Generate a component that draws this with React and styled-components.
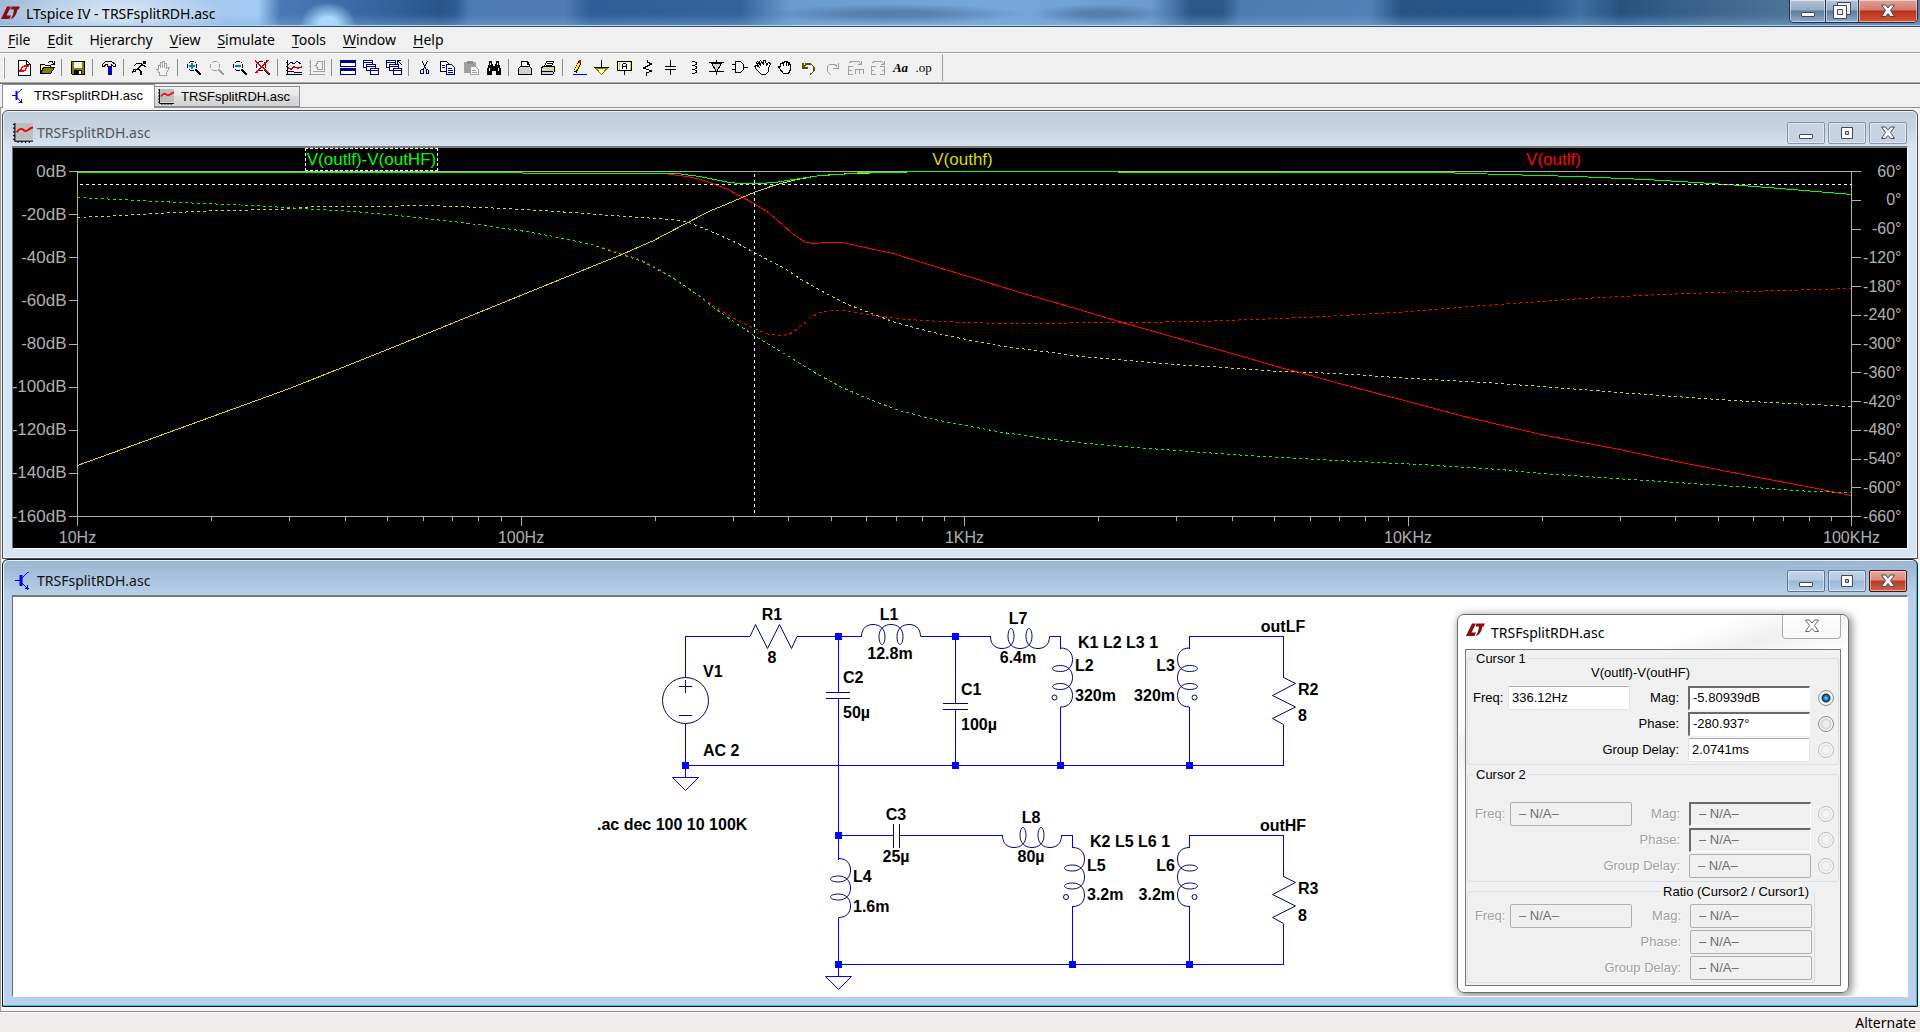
import React, { useLayoutEffect, useRef, useState } from "react";
import styled, { createGlobalStyle, css } from "styled-components";

const UI = `"Noto Sans", "Open Sans", sans-serif`;
const SANS = `"Liberation Sans", Arial, sans-serif`;

const Global = createGlobalStyle`
  *, *::before, *::after { box-sizing: border-box; }
  body { margin: 0; overflow: hidden; background: #f0f0f0; }
  button, input { font: inherit; color: inherit; margin: 0; }
`;

const Shell = styled.div`
  height: 100vh;
  display: flex;
  flex-direction: column;
  background: #f0f0f0;
  color: #000;
  font: 14px/18px ${UI};
`;

/* ---------- main caption ---------- */
const TitleBar = styled.header`
  flex: none;
  height: 27px;
  display: flex;
  align-items: flex-start;
  padding: 0 2px 0 1px;
  border-bottom: 1px solid #33486a;
  box-shadow: inset 0 -1px #b9d2ee;
  background:
    radial-gradient(ellipse 120px 26px at 110px 16px, rgba(255, 255, 255, 0.5), rgba(255, 255, 255, 0) 100%),
    radial-gradient(ellipse 28px 22px at 328px 24px, #a9d8ff 30%, rgba(140, 190, 240, 0) 100%),
    radial-gradient(ellipse 130px 10px at 895px 14px, rgba(62, 96, 140, 0.5) 30%, rgba(62, 96, 140, 0) 100%),
    radial-gradient(ellipse 70px 10px at 1100px 14px, rgba(62, 96, 140, 0.5) 30%, rgba(62, 96, 140, 0) 100%),
    linear-gradient(180deg, rgba(255, 255, 255, 0) 55%, rgba(130, 175, 225, 0.45)),
    linear-gradient(92deg, #9ebbd9 0, #bcd3ec 120px, #a5c8ee 225px, #a2cdf8 258px, #4a7ab5 280px,
      #3969a4 360px, #28548a 440px, #2d5b93 455px, #4c79b0 470px, #4f7bb2 565px, #2e5e97 590px,
      #326399 740px, #6c9bcf 790px, #77a7db 1000px, #6d9bd0 1150px, #2b5886 1190px, #2b5886 1222px,
      #4e7bb0 1240px, #5280b6 1370px, #275483 1400px, #275687 1540px, #3f6f9f 1580px, #27527f 1620px,
      #376089 1680px, #4b7297 1780px, #5c7fa3 100%);
`;
const TitleIcon = styled.span`
  padding-top: 6px;
`;
const TitleText = styled.h1`
  flex: 1;
  margin: 0;
  padding: 4px 0 0 6px;
  font: 400 14px/19px ${UI};
`;
const MainCaption = styled.div`
  display: flex;
  height: 23px;
  border: 1px solid #1f2f48;
  border-top: 0;
  border-radius: 0 0 5px 5px;
  overflow: hidden;
`;
const MainCaptionButton = styled.button`
  width: ${(p) => p.$w}px;
  padding: 0;
  border: 0;
  border-left: ${(p) => (p.$first ? 0 : "1px solid #1f2f48")};
  display: flex;
  align-items: center;
  justify-content: center;
  box-shadow: inset 0 0 0 1px rgba(255, 255, 255, 0.5);
  background: ${(p) =>
    p.$close
      ? "linear-gradient(#e4a398 0, #d47a6c 45%, #b8301a 50%, #d4563a 100%)"
      : "linear-gradient(#b4c4d8 0, #93a9c4 45%, #5c7ca2 50%, #8eabca 100%)"};
`;

/* ---------- menu ---------- */
const MenuBar = styled.nav`
  flex: none;
  height: 26px;
  display: flex;
  align-items: center;
  gap: 17px;
  padding-left: 8px;
  border-bottom: 1px solid #a0a0a0;
`;
const MenuItem = styled.button`
  border: 0;
  padding: 0;
  background: none;
  line-height: 20px;
  u { text-underline-offset: 2px; }
`;

/* ---------- tool bar ---------- */
const ToolRow = styled.div`
  flex: none;
  height: 31px;
  display: flex;
  border-top: 1px solid #fff;
  border-bottom: 1px solid #6e6e6e;
  box-shadow: inset 0 -1px #a6a6a6;
  padding: 0 0 2px 3px;
`;
const ToolBar = styled.div`
  display: flex;
  align-items: center;
  padding-right: 7px;
  border-right: 1px solid #a0a0a0;
`;
const Grip = styled.span`
  width: 2px;
  height: 22px;
  margin-right: 7px;
  border-right: 1px solid #a0a0a0;
  border-left: 1px solid #fff;
`;
const ToolButton = styled.button`
  width: 23px;
  height: 22px;
  padding: 0;
  border: 0;
  background: none;
  display: flex;
  align-items: center;
  justify-content: center;
`;
const Separator = styled.span`
  width: 1px;
  height: 17px;
  margin: 0 4px 0 3px;
  background: #8c8c8c;
`;
const Pixels = styled.svg`
  display: block;
  overflow: visible;
  shape-rendering: crispEdges;
  fill: none;
  stroke-width: 1;
`;

/* ---------- document tabs ---------- */
const TabRow = styled.div`
  flex: none;
  height: 24px;
  display: flex;
  align-items: flex-end;
  padding-left: 2px;
  border-bottom: 1px solid #8e8f94;
`;
const Tab = styled.button`
  display: flex;
  align-items: center;
  height: ${(p) => (p.$active ? 24 : 21)}px;
  width: ${(p) => (p.$active ? 153 : 145)}px;
  padding: 0 0 ${(p) => (p.$active ? 2 : 0)}px ${(p) => (p.$active ? 8 : 3)}px;
  gap: 7px;
  border: 1px solid #8c8e94;
  border-bottom: ${(p) => (p.$active ? 0 : "1px solid #8c8e94")};
  border-left: ${(p) => (p.$active ? "1px solid #8c8e94" : 0)};
  margin-bottom: ${(p) => (p.$active ? -1 : 0)}px;
  background: ${(p) => (p.$active ? "#fff" : "linear-gradient(#f1f1f1 0, #e8e8e8 45%, #dcdcdc 50%, #d2d2d2 100%)")};
  font: 13px/18px ${SANS};
`;

/* ---------- child windows ---------- */
const Desk = styled.main`
  flex: 1;
  min-height: 0;
  display: flex;
  flex-direction: column;
  padding: 2px 2px 4px 2px;
  background: linear-gradient(90deg, #9a9a9a 0 1px, #f4f4f4 1px 100%);
`;
const Child = styled.section`
  flex: 1 1 0;
  min-height: 0;
  display: flex;
  flex-direction: column;
  border: 1px solid ${(p) => (p.$active ? "#15181c" : "#4a4d50")};
  border-radius: 6px 6px 0 0;
  padding: 0 9px 9px 9px;
  box-shadow: ${(p) => (p.$active ? "inset -1px -1px #37bfe0, inset 1px 1px #e6f1fb" : "inset 0 0 0 1px #eef4fa")};
  background: ${(p) =>
    p.$active
      ? "linear-gradient(#99b4d1 0, #b9d1ea 36px, #b9d1ea 100%)"
      : "linear-gradient(#bfcddb 0, #c8d4e2 18px, #d7e4f2 36px)"};
`;
const ChildTitle = styled.header`
  flex: none;
  height: 35px;
  display: flex;
  align-items: center;
  padding: 8px 1px 0 0;
`;
const ChildName = styled.h2`
  flex: 1;
  margin: 0;
  padding-left: 4px;
  font: 400 14px/18px ${UI};
  color: ${(p) => (p.$active ? "#101010" : "#50565c")};
`;
const ChildIcon = styled.span`
  display: flex;
  width: 21px;
  justify-content: flex-end;
`;
const CaptionGroup = styled.div`
  display: flex;
  gap: 3px;
`;
const CaptionButton = styled.button`
  width: 38px;
  height: 22px;
  padding: 0;
  display: flex;
  align-items: center;
  justify-content: center;
  border-radius: 2px;
  border: 1px solid #8493b0;
  box-shadow: inset 0 0 0 1px rgba(255, 255, 255, 0.45);
  background: #c6d3e3;
  ${(p) =>
    p.$tone === "active" &&
    css`
      border-color: #5c7291;
      background: linear-gradient(#c3d4e8 0, #b6cae2 45%, #9bb7d6 50%, #b4cde8 100%);
    `}
  ${(p) =>
    p.$tone === "close" &&
    css`
      border-color: #43141a;
      background: linear-gradient(#e9a89c 0, #dc8a7b 45%, #b73a22 50%, #d2604a 100%);
    `}
`;
const Canvas = styled.div`
  position: relative;
  flex: 1;
  min-height: 0;
  border: 1px solid #fff;
  border-top: 2px solid #77797b;
  border-left-color: #6e6e6e;
  background: ${(p) => (p.$dark ? "#000" : "#fff")};
  overflow: hidden;
`;

/* ---------- wave form ---------- */
const Plot = styled.div`
  height: 100%;
  display: flex;
  flex-direction: column;
`;
const TraceLabels = styled.div`
  flex: none;
  display: grid;
  grid-template-columns: repeat(3, 1fr);
  justify-items: center;
  height: 23px;
  padding: 0 58px 0 63px;
`;
const TraceLabel = styled.span`
  height: 23px;
  padding: 0 1px;
  border: 1px dashed ${(p) => (p.$selected ? "#fff" : "transparent")};
  color: ${(p) => p.$color};
  font: 17px/21px ${SANS};
`;
const PlotArea = styled.div`
  flex: 1;
  min-height: 0;
`;
const PlotSvg = styled.svg`
  display: block;
  width: 100%;
  height: 100%;
  overflow: visible;
  fill: none;
`;
const AxisText = styled.text`
  fill: #b0b0b0;
  font: ${(p) => (p.$gain ? 17 : 16)}px ${SANS};
`;

const GREEN_MAG = "78,172 521,172 525,173 677,173 700,176 715,179 729,182 742,183 760,183 775,182 800,178 820,175 840,174 863,172 950,171 1280,172 1438,172 1503,174 1576,176 1645,179 1696,182 1741,185 1780,188 1815,191 1851,194";
const YELLOW_MAG = "78,465 290,388 388,349 521,295 622,254 640,246 654,240 688,222 711,210 726,204 754,192 771,186 781,183 797,179 820,175 852,173 926,171 1280,171";
const RED_MAG = "78,172 521,172 525,173 665,173 671,174 687,176 701,179 718,185 728,189 741,196 754,203 767,211 779,221 795,235 806,242 815,243 826,242 842,242 856,245 893,253 922,262 965,275 1020,292 1079,309 1122,322 1175,337 1232,353 1280,367 1300,372 1339,383 1408,401 1464,416 1541,434 1619,449 1676,461 1753,476 1811,487 1851,495";
const GREEN_PH = "78,197 98,198 180,202 253,205 302,208 355,211 408,216 453,221 486,225 526,231 559,237 592,244 622,254 640,260 654,267 673,277 697,294 715,308 738,324 754,335 789,356 813,371 840,386 865,397 899,410 934,419 965,425 1003,432 1052,439 1097,444 1175,450 1232,454 1280,457 1337,460 1419,464 1500,469 1541,473 1615,478 1676,482 1753,487 1811,491 1851,492";
const YELLOW_PH = "78,217 122,215 175,212 220,210 278,209 318,206 371,206 429,205 482,207 526,209 571,212 640,217 658,218 679,220 689,222 709,230 738,243 754,252 783,267 803,280 828,294 848,304 877,315 895,322 922,329 942,334 966,339 1003,346 1044,351 1081,356 1130,360 1175,364 1224,367 1280,371 1337,373 1411,378 1484,382 1541,386 1619,392 1688,397 1749,401 1811,404 1851,406";
const RED_PH = "78,197 98,198 180,202 253,205 302,208 355,211 408,216 453,221 486,225 526,231 559,237 592,244 622,253 640,259 654,266 664,272 689,288 713,305 734,318 754,328 769,334 783,335 791,333 803,324 811,317 820,312 832,310 844,310 869,314 897,318 922,320 966,322 1007,323 1130,322 1199,321 1280,318 1325,316 1411,311 1484,305 1541,301 1582,298 1639,295 1713,292 1782,290 1851,288";

const DECADES = ["10Hz", "100Hz", "1KHz", "10KHz", "100KHz"];
const GAINS = [0, -20, -40, -60, -80, -100, -120, -140, -160];
const PHASES = [60, 0, -60, -120, -180, -240, -300, -360, -420, -480, -540, -600, -660];

function WaveForm() {
  const box = useRef(null);
  const [size, setSize] = useState({ w: 1894, h: 377 });
  useLayoutEffect(() => {
    const read = () => {
      const r = box.current.getBoundingClientRect();
      setSize({ w: Math.round(r.width), h: Math.round(r.height) });
    };
    read();
    window.addEventListener("resize", read);
    return () => window.removeEventListener("resize", read);
  }, []);

  const left = 64.5;
  const right = size.w - 55.5;
  const bottom = size.h - 31.5;
  const top = 0.5;
  const sx = (x) => left + ((x - 78) / 1773) * (right - left);
  const sy = (y) => top + ((y - 171) / 345) * (bottom - top);
  const path = (pts) =>
    pts
      .split(" ")
      .map((p) => p.split(",").map(Number))
      .map(([x, y]) => `${sx(x).toFixed(1)},${sy(y).toFixed(1)}`)
      .join(" ");
  const tick = (d, n) => Math.round(left + ((d + Math.log10(n)) / 4) * (right - left)) + 0.5;
  const half = (v) => Math.floor(v) + 0.5;

  return (
    <PlotArea ref={box}>
      <PlotSvg role="img" aria-label="Frequency response">
        <g stroke="#b0b0b0" shapeRendering="crispEdges">
          <path d={`M${left} ${top}H${right}V${bottom}H${left}Z`} />
          {GAINS.map((g, i) => (
            <path key={g} d={`M${left - 9} ${half(top + (i / 8) * (bottom - top))}h9`} />
          ))}
          {PHASES.map((p, i) => (
            <path key={p} d={`M${right} ${half(top + (i / 12) * (bottom - top))}h9`} />
          ))}
          {DECADES.map((label, d) => (
            <path key={label} d={`M${half(left + (d / 4) * (right - left))} ${bottom}v9`} />
          ))}
          {[0, 1, 2, 3].map((d) =>
            [2, 3, 4, 5, 6, 7, 8, 9].map((n) => <path key={`${d}-${n}`} d={`M${tick(d, n)} ${bottom}v4`} />)
          )}
        </g>
        <g shapeRendering="crispEdges">
          <polyline points={path(RED_PH)} stroke="#ff0000" strokeDasharray="3 3" />
          <polyline points={path(YELLOW_PH)} stroke="#d8d800" strokeDasharray="3 3" />
          <polyline points={path(GREEN_PH)} stroke="#00ff00" strokeDasharray="3 3" />
          <polyline points={path(RED_MAG)} stroke="#ff0000" />
          <polyline points={path(YELLOW_MAG)} stroke="#d8d800" />
          <polyline points={path(GREEN_MAG)} stroke="#00ff00" />
          <path d={`M${left + 2} ${half(sy(184))}H${right}`} stroke="#fff" strokeDasharray="3 3" />
          <path d={`M${half(sx(755))} ${top + 2}V${bottom - 3}`} stroke="#fff" strokeDasharray="3 3" />
        </g>
        {GAINS.map((g, i) => (
          <AxisText $gain key={g} x={left - 11} y={Math.round(top + (i / 8) * (bottom - top)) + 5} textAnchor="end">{`${g}dB`}</AxisText>
        ))}
        {PHASES.map((p, i) => (
          <AxisText key={p} x={right + 50} y={Math.round(top + (i / 12) * (bottom - top)) + 5} textAnchor="end">{`${p}°`}</AxisText>
        ))}
        {DECADES.map((label, d) => (
          <AxisText key={label} x={left + (d / 4) * (right - left)} y={bottom + 26} textAnchor="middle">{label}</AxisText>
        ))}
      </PlotSvg>
    </PlotArea>
  );
}

/* ---------- schematic ---------- */
const SchematicSvg = styled.svg`
  display: block;
  width: 100%;
  height: 100%;
  fill: none;
  stroke: #000080;
  text {
    fill: #000;
    stroke: none;
    font: 700 16px ${SANS};
  }
`;

const COIL =
  "M0 0C0 -9 6 -12 11.500 -12C18 -12 23.500 -8 23.500 0C23.500 5 22 8 20.500 8C19 8 17.500 5 17.500 0C17.500 -8 23 -12 29.500 -12C36 -12 41.500 -8 41.500 0C41.500 5 40 8 38.500 8C37 8 35.500 5 35.500 0C35.500 -8 41 -12 47.500 -12C53 -12 59 -9 59 0";
const Coil = ({ x, y, t = "" }) => <path d={COIL} transform={`translate(${x} ${y}) ${t}`} />;
const Ground = ({ x, y }) => <path d={`M${x - 13} ${y}h26l-13 13z`} stroke="#0000ff" />;
const Node = ({ x, y }) => <rect x={x - 3.5} y={y - 3.5} width="7" height="7" fill="#0000ff" stroke="none" />;

const NODES = [
  [838.5, 636.5], [955.5, 636.5], [685.5, 765.5], [955.5, 765.5], [1060.5, 765.5], [1189.5, 765.5],
  [838.5, 835.5], [838.5, 964.5], [1072.5, 964.5], [1189.5, 964.5],
];
const NOTES = [
  [772, 620, "R1", "middle"], [772, 663, "8", "middle"], [889, 620, "L1", "middle"], [890, 659, "12.8m", "middle"],
  [1018, 624, "L7", "middle"], [1018, 663, "6.4m", "middle"], [703, 677, "V1"], [843, 683, "C2"], [843, 718, "50µ"],
  [961, 695, "C1"], [961, 730, "100µ"], [703, 756, "AC 2"], [597, 830, ".ac dec 100 10 100K"],
  [896, 820, "C3", "middle"], [896, 862, "25µ", "middle"], [853, 882, "L4"], [853, 912, "1.6m"],
  [1078, 648, "K1 L2 L3 1"], [1075, 671, "L2"], [1075, 701, "320m"], [1175, 671, "L3", "end"], [1175, 701, "320m", "end"],
  [1283, 632, "outLF", "middle"], [1298, 695, "R2"], [1298, 721, "8"], [1031, 823, "L8", "middle"],
  [1031, 862, "80µ", "middle"], [1090, 847, "K2 L5 L6 1"], [1087, 871, "L5"], [1087, 900, "3.2m"],
  [1175, 871, "L6", "end"], [1175, 900, "3.2m", "end"], [1283, 831, "outHF", "middle"], [1298, 894, "R3"], [1298, 921, "8"],
];

function Schematic() {
  return (
    <SchematicSvg role="img" aria-label="Crossover schematic">
      <g transform="translate(-13 -597)">
        <g stroke="#0000ff" shapeRendering="crispEdges">
          <path d="M685.500 677.500V636.500H750M797 636.500H861.500M920.500 636.500H990.500M1049.500 636.500H1060.500V648.500" />
          <path d="M838.500 636.500V692.500M838.500 698.500V859.500M955.500 636.500V703.500M955.500 709.500V765.500" />
          <path d="M685.500 724V777.500M685.500 765.500H1283.500V724.500M1060.500 706.500V765.500M1189.500 706.500V765.500" />
          <path d="M1189.500 648.500V636.500H1283.500V677.500" />
          <path d="M838.500 835.500H893.500M899.500 835.500H1002.500M1060.500 835.500H1072.500V847.500" />
          <path d="M838.500 917.500V976.500M838.500 964.500H1283.500V923.500M1072.500 906V964.500M1189.500 906V964.500" />
          <path d="M1189.500 847.500V835.500H1283.500V876.500" />
        </g>
        <path d="M750 636.500L755.500 624.500L767.500 648.500L779.500 624.500L791.500 648.500L797 636.500" />
        <path d="M1283.500 677.500L1295.500 683.500L1272.500 695.500L1295.500 707L1272.500 718.500L1283.500 724.500" />
        <path d="M1283.500 876.500L1295.500 882.500L1272.500 894.500L1295.500 906L1272.500 917.500L1283.500 923.500" />
        <circle cx="685.500" cy="700.500" r="23" />
        <g shapeRendering="crispEdges">
          <path d="M679 686.500H692M685.500 680V693M679 715.500H692" />
          <path d="M826 692.500H850M826 698.500H850M943 703.500H968M943 709.500H968M893.500 824V848M899.500 824V848" />
        </g>
        <Coil x={861.5} y={636.5} />
        <Coil x={990.5} y={636.5} t="scale(1 -1)" />
        <Coil x={1002.5} y={835.5} t="scale(1 -1)" />
        <Coil x={838.5} y={858.5} t="rotate(90)" />
        <Coil x={1060.5} y={648} t="rotate(90)" />
        <Coil x={1072.5} y={847.5} t="rotate(90)" />
        <Coil x={1189.5} y={648} t="rotate(90) scale(1 -1)" />
        <Coil x={1189.5} y={847.5} t="rotate(90) scale(1 -1)" />
        {[[1054.5, 697.5], [1194.5, 697.5], [1066, 897], [1194.5, 897]].map(([x, y]) => (
          <circle key={`${x} ${y}`} cx={x} cy={y} r="2.500" />
        ))}
        <Ground x={685.5} y={777.5} />
        <Ground x={838.5} y={976.5} />
        {NODES.map(([x, y]) => <Node key={`${x} ${y}`} x={x} y={y} />)}
        {NOTES.map(([x, y, s, anchor]) => (
          <text key={`${x} ${y}`} x={x} y={y} textAnchor={anchor || "start"}>{s}</text>
        ))}
      </g>
    </SchematicSvg>
  );
}

/* ---------- cursor dialog ---------- */
const Dialog = styled.section`
  position: absolute;
  right: 58px;
  top: 17px;
  width: 392px;
  padding: 0 7px 6px;
  border: 1px solid #6b6b6b;
  border-radius: 7px;
  background: linear-gradient(160deg, #fff 0, #fff 20%, #f0f0f0 26%, #fff 34%, #fff 100%);
  box-shadow: inset 0 0 0 1px #fff, 2px 2px 8px 1px rgba(0, 0, 0, 0.45);
`;
const DialogTitle = styled.header`
  display: flex;
  height: 34px;
`;
const DialogName = styled.h2`
  flex: 1;
  margin: 0;
  padding: 9px 0 0 6px;
  font: 400 14px/18px ${UI};
`;
const DialogIcon = styled.span`
  padding: 8px 0 0 1px;
`;
const DialogClose = styled.button`
  width: 59px;
  height: 24px;
  padding: 0;
  display: flex;
  align-items: center;
  justify-content: center;
  border: 1px solid #a9a9a9;
  border-top: 0;
  border-radius: 0 0 4px 4px;
  background: linear-gradient(#fff, #f7f7f7);
`;
const DialogBody = styled.form`
  display: flex;
  flex-direction: column;
  gap: 2px;
  padding: 1px 1px 2px;
  border: 1px solid #777;
  background: #f0f0f0;
  font: 13px/16px ${SANS};
`;
const Group = styled.fieldset`
  min-width: 0;
  margin: 0 ${(p) => (p.$short ? 24 : 0)}px 0 0;
  padding: 0 0 ${(p) => (p.$live || p.$short ? 2 : 3)}px 5px;
  border: 1px solid #d5dfe5;
  border-radius: 3px;
`;
const Legend = styled.legend`
  padding: 0 3px;
  margin-left: ${(p) => (p.$end ? "auto" : "0")};
  margin-right: ${(p) => (p.$end ? "2px" : "0")};
  line-height: 16px;
`;
const Source = styled.p`
  margin: 0;
  height: 19px;
  padding-right: 30px;
  text-align: center;
  line-height: 12px;
`;
const Rows = styled.div`
  display: flex;
  flex-direction: column;
  gap: 2px;
  padding-top: ${(p) => (p.$short ? 4 : 0)}px;
  padding-right: ${(p) => (p.$short ? 2 : 4)}px;
  padding-left: ${(p) => (p.$live ? 0 : 2)}px;
`;
const Row = styled.div`
  display: flex;
  align-items: center;
  justify-content: flex-end;
  height: 24px;
`;
const FieldLabel = styled.label`
  color: ${(p) => (p.$off ? "#a0a0a0" : "#000")};
  text-shadow: ${(p) => (p.$off ? "1px 1px #fff" : "none")};
  ${(p) => p.$lead && "width: 35px;"}
  margin-right: ${(p) => (p.$lead ? 0 : 9)}px;
`;
const Field = styled.input`
  width: 122px;
  height: 24px;
  padding: 0 3px 1px;
  border: 1px solid #e2e3ea;
  border-top-color: #abadb3;
  border-radius: 2px;
  background: #fff;
  outline: 0;
  ${(p) =>
    p.$sunken &&
    css`
      border: 1px solid #fff;
      border-top: 2px solid #696969;
      border-left: 2px solid #696969;
      border-radius: 0;
    `}
  &:disabled {
    padding-left: 8px;
    color: #6d6d6d;
    background: #f0f0f0;
    border-color: ${(p) => (p.$sunken ? "#696969 #fff #fff #696969" : "#afafaf")};
  }
  ${(p) => p.$lead && "margin-right: auto;"}
`;
const Radio = styled.input`
  appearance: none;
  flex: none;
  width: 16px;
  height: 16px;
  margin-left: ${(p) => (p.$live ? 8 : 7)}px;
  border: 1px solid #8e8f8f;
  border-radius: 50%;
  background: radial-gradient(circle, #eee 0 3px, #cfcfcf 5px, #f6f6f6 6px);
  &:checked {
    background: radial-gradient(circle at 50% 50%, #9fe4fb 0, #1f7fc0 2px, #10344f 4px, #f2f4f6 5px);
  }
  &:disabled {
    border-color: #bcbcbc;
    background: radial-gradient(circle, #f3f3f3 0 3px, #e0e0e0 5px, #f8f8f8 6px);
  }
`;

const CURSORS = [
  { id: "c1", title: "Cursor 1", live: true, source: "V(outlf)-V(outHF)", freq: "336.12Hz", values: ["-5.80939dB", "-280.937°", "2.0741ms"], radios: true },
  { id: "c2", title: "Cursor 2", source: "", freq: "– N/A–", values: ["– N/A–", "– N/A–", "– N/A–"], radios: true },
  { id: "ratio", title: "Ratio (Cursor2 / Cursor1)", freq: "– N/A–", values: ["– N/A–", "– N/A–", "– N/A–"] },
];

function CursorDialog() {
  return (
    <Dialog aria-label="Cursor readout">
      <DialogTitle>
        <DialogIcon><LtLogo /></DialogIcon>
        <DialogName>TRSFsplitRDH.asc</DialogName>
        <DialogClose type="button" aria-label="Close readout">
          <Glyph kind="x" line="#666" />
        </DialogClose>
      </DialogTitle>
      <DialogBody>
        {CURSORS.map((c) => (
          <Group key={c.id} $live={c.live} $short={!c.radios}>
            <Legend $end={!c.radios}>{c.title}</Legend>
            {c.source !== undefined && <Source>{c.source}</Source>}
            <Rows $live={c.live} $short={!c.radios}>
              {["Mag:", "Phase:", "Group Delay:"].map((name, i) => (
                <Row key={name}>
                  {i === 0 && (
                    <>
                      <FieldLabel $lead $off={!c.live} htmlFor={`${c.id}-f`}>Freq:</FieldLabel>
                      <Field $lead id={`${c.id}-f`} defaultValue={c.freq} disabled={!c.live} />
                    </>
                  )}
                  <FieldLabel $off={!c.live} htmlFor={`${c.id}-${i}`}>{name}</FieldLabel>
                  <Field id={`${c.id}-${i}`} defaultValue={c.values[i]} disabled={!c.live} $sunken={c.radios && i < 2} />
                  {c.radios && (
                    <Radio
                      type="radio"
                      name="slope"
                      aria-label={`${c.title} ${name}`}
                      defaultChecked={c.live && i === 0}
                      disabled={!c.live || i === 2}
                      $live={c.live}
                    />
                  )}
                </Row>
              ))}
            </Rows>
          </Group>
        ))}
      </DialogBody>
    </Dialog>
  );
}

/* ---------- drawings ---------- */
const LtLogo = () => (
  <svg width="19" height="14" viewBox="0 0 19 14" fill="#8b0a10">
    <path d="M6 0.500h4L5.500 9.500H10L8.500 13H0z" />
    <path d="M10.500 0.500H19L17.500 3.500H16.500C15.500 8 14 12 9.500 13C12 10 12.500 7 13 3.500H9.500z" />
  </svg>
);

const Glyph = ({ kind, line = "#40485c" }) => {
  if (kind === "min")
    return (
      <svg width="16" height="16" viewBox="0 0 16 16">
        <rect x="1.500" y="9.500" width="13" height="4" rx="0.500" fill="#fff" stroke={line} />
      </svg>
    );
  if (kind === "max")
    return (
      <svg width="14" height="14" viewBox="0 0 14 14" stroke={line} fillRule="evenodd">
        <path d="M1.500 1.500h11v11h-11zM5.500 5.500v3h3v-3z" fill="#fff" />
      </svg>
    );
  if (kind === "restore")
    return (
      <svg width="18" height="18" viewBox="0 0 18 18" stroke={line} fillRule="evenodd">
        <path d="M4.500 .5h13v12h-13z" fill="#e8eef5" />
        <path d="M.5 3.500h13v13H.5zM4.500 7.500v5h5v-5z" fill="#fff" />
      </svg>
    );
  return (
    <svg width="16" height="14" viewBox="0 0 16 14" fill="#fff" stroke={line}>
      <path d="M1.500 1h4L8 4l2.500-3h4L10.500 6.500 14.500 12.500h-4L8 9.500l-2.500 3h-4L5.500 6.500z" />
    </svg>
  );
};

const WaveIcon = ({ size = 16 }) => (
  <svg width={size} height={size} viewBox="0 0 16 16" fill="none">
    <rect x="2" y="0" width="14" height="13" fill="#bdbdbd" />
    <path d="M1.500 0V14.500H16M0 1h2M0 4h2M0 7h2M0 10h2M0 13h2M4 14v2M7 14v2M10 14v2M13 14v2" stroke="#111" />
    <path d="M3 7.500C5 4 7 4 9 6C11 8 13 3.500 16 3.500" stroke="#f00000" strokeWidth="1.600" />
  </svg>
);

const SchematicIcon = () => (
  <svg width="18" height="20" viewBox="0 0 18 20" fill="none" stroke="#0000f0">
    <path d="M0 9.500H5M7 7L12 2M12 1.500h2M7 12L13 18M10 17.500h4M12.500 14v5" />
    <path d="M6 4V15" strokeWidth="3" />
  </svg>
);
const TabSchematicIcon = () => (
  <svg width="16" height="16" viewBox="0 0 16 16" fill="none" stroke="#0000e0">
    <path d="M1 7.500H5M6 5.500L11 1M6 9.500L11 15M7.500 14.500h4M10.500 11v4" />
    <path d="M5.500 3V12" strokeWidth="2" />
  </svg>
);

const lens = (stroke) => (
  <>
    <path d="M4 1.500h4M2.500 2.500h1M8.500 2.500h1M1.500 4v4M10.500 4v4M2.500 9.500h1M8.500 9.500h1M4 10.500h4" stroke={stroke} />
    <path d="M10 10l5 5" stroke={stroke} strokeWidth="2" />
  </>
);
const cascade = (
  <>
    <path d="M.5.5h9v7h-9z" fill="#fff" stroke="#000080" />
    <path d="M1 2.500h8" stroke="#000080" />
    <path d="M3.500 4.500h9v6h-9z" fill="#fff" stroke="#000080" />
    <path d="M4 6h8" stroke="#000080" />
    <path d="M7.500 8.500h8v6h-8z" fill="#fff" stroke="#000080" />
    <path d="M8 10h7" stroke="#000080" />
  </>
);
const K = "#000";
const G = "#a0a0a0";
const ICONS = {
  new: (<><path d="M2.500.5h8l4 4v10.500h-12z" fill="#fff" stroke={K} /><path d="M10.500.5v4h4" stroke={K} /><path d="M7 6L4 11h4M8 6h5M11 6l-2 5" stroke="#f00" strokeWidth="1.600" /></>),
  open: (<><path d="M1.500 13.500v-9h4l1 1h5v3" fill="#ffff9c" stroke={K} /><path d="M1.500 13.500l3-6h11l-4 6z" fill="#808000" stroke={K} /><path d="M9 2.500l2-1h2l2 3M15.500 1v4M12 4.500h3" stroke={K} /></>),
  save: (<><path d="M1.500 1.500h13v13h-12l-1-1z" fill="#808000" stroke={K} /><path d="M4 2h8v6H4z" fill="#f0f0f0" /><path d="M4 10h8v4H4z" fill={K} /><path d="M9 11h2v3H9z" fill="#fff" /></>),
  hammer: (<><path d="M1.500 4.500l3-3h6l4 3v2h-2l-2-2v2h-4v-2h-2l-1 2h-2z" fill="#e8e8e8" stroke={K} /><path d="M7 7h4v8H7z" fill="#0000c8" /></>),
  run: (<><path d="M11 1h3v3h-3z" fill={K} /><path d="M4 3.500h5l2 2l3 1M10 5L6 9l3 2v4M6 9l-5 1M4 4l-2 2M0 12l4-1" stroke={K} strokeWidth="1.400" /></>),
  stop: (<path d="M3.500 9V5.500h2V8V2.500h2V8V1.500h2V8V3.500h2V9l1-2h2l-3 6v2h-7v-2l-3-4h1z" stroke={G} fill="#f4f4f4" />),
  zoomIn: (<>{lens(K)}<path d="M6 3v6M3 6h6" stroke="#008b8b" strokeWidth="1.400" /></>),
  zoomArea: lens(G),
  zoomOut: (<>{lens(K)}<path d="M3 6h6" stroke="#008b8b" strokeWidth="1.600" /></>),
  zoomFit: (<>{lens(K)}<path d="M0 1L14 13M13 0L1 13" stroke="#e00000" strokeWidth="1.600" /></>),
  plot: (<><path d="M1.500 0V15M0 2h2M0 6h2M0 10h2M0 14.500H16" stroke={K} /><path d="M2 5l3-3 3 2 3-3 4 3" stroke="#000080" /><path d="M2 8l3 1 3-2 4 1 4-1" stroke="#e00000" strokeWidth="1.500" /><path d="M2 11.500h5l2 1h7" stroke="#000080" /></>),
  fft: (<><path d="M1.500 0V15M0 2h2M0 6h2M0 10h2M0 14.500H16M5 5.500h2l2-4h4v8H9l-2-4M15.500 0v12M4 11.500h12" stroke={G} /></>),
  tile: (<><path d="M.5.5h15v6H.5zM.5 8.500h15v6H.5z" fill="#fff" stroke="#000080" /><path d="M0 2h16M0 10h16" stroke="#000080" strokeWidth="2" /></>),
  cascade,
  closeAll: (<>{cascade}<path d="M11 .5h4M11.500 0v4M12 1l4 4" stroke={K} /></>),
  cut: (<><path d="M5 1l4 8M10.500 1l-4 8" stroke={K} /><path d="M4.500 9.500h2v4h-3v-3zM9.500 9.500h1l1 1v3h-2z" stroke="#000080" /></>),
  copy: (<><path d="M.5 1.500h6l3 3v7h-9z" fill="#fff" stroke={K} /><path d="M6.500 4.500h5l3 3v7h-8z" fill="#fff" stroke="#000080" /><path d="M2 5.500h3M2 7.500h3M8 8.500h4M8 10.500h5M8 12.500h5" stroke="#000080" /></>),
  paste: (<><path d="M1 2h12v11H1z" fill={G} /><path d="M4 1h6v3H4z" fill="#8a8a8a" /><path d="M7.500 6.500h5l3 3v5h-8z" fill="#f4f4f4" stroke={G} /><path d="M9 10.500h4M9 12.500h5" stroke={G} /></>),
  find: (<><path d="M3 1h3v3h1v2h2V4h1V1h3v3l2 5v6h-5v-4H6v4H1V9l2-5z" fill={K} /><path d="M4.500 3v2M11.500 3v2M3.500 8v3M12 8v3" stroke="#fff" /></>),
  printSetup: (<><path d="M4.500 6.500v-5h6l2 3v2" fill="#fff" stroke={K} /><path d="M1.500 8.500l2-2h9l2 2v6h-13z" fill="#d0d0d0" stroke={K} /><path d="M10.500 1.500v3h2" stroke={K} /></>),
  print: (<><path d="M4.500 6.500l2-5h7l-2 5" fill="#fff" stroke={K} /><path d="M7 3.500h5M6 5.500h5" stroke={K} /><path d="M1.500 7.500l2-1h11v5l-2 3h-11z" fill="#d0d0d0" stroke={K} /><path d="M2 11.500h11" stroke={K} /><path d="M6 9.500h4" stroke="#e0e000" /></>),
  wire: (<><path d="M9 2L4 12" stroke={K} strokeWidth="4" /><path d="M9 2L4 11" stroke="#ffee00" strokeWidth="2" /><path d="M8 0h2v3H8z" fill="#e00000" /><path d="M2 14.500h14" stroke="#0000ff" /></>),
  ground: (<><path d="M7.500 0v7M0 7.500h15" stroke={K} /><path d="M2 8.500h11l-5.500 6z" stroke="#808000" fill="#ffffb0" /></>),
  label: (<><path d="M.5 1.500h14v9H.5z" fill="#fff" stroke={K} /><path d="M2 2v8M13 2v8" stroke="#d0d000" /><path d="M5.500 9V4.500l1-1h2l1 1V9M5.500 6.500h4M7.500 11v4" stroke={K} /></>),
  resistor: <path d="M7.500 0v2l4 2-8 4 8 3-5 2v3" stroke={K} />,
  capacitor: <path d="M7.500 0v6M2 6.500h11M2 9.500h11M7.500 10v5" stroke={K} />,
  inductor: <path d="M6 1.500h2l2 1v2l-2 1h-2h2l2 1v2l-2 1h-2h2l2 1v2l-2 1h-2" stroke={K} />,
  diode: (<><path d="M7.500 0v3M0 2.500h15M0 11.500h15M7.500 11v4" stroke={K} /><path d="M2.500 3.500h10l-5 8z" fill="#d0d0d0" stroke={K} /></>),
  gate: (<path d="M3.500 1.500h5l3 3v5l-3 3h-5zM0 4.500h3M0 9.500h3M12 7.500h4" stroke={K} />),
  move: (<path d="M1.500 5.500l2 1-2-4 1-1 3 4-1-4 1-1 3 4V.500h2l1 5 2-3 2 1-2 5v3l-3 3h-4l-5-5-2-3z" fill="#fff" stroke={K} />),
  drag: (<path d="M2.500 6.500v-3h2v-1h2v-1h3v1h2v2h1v5l-2 4h-5l-4-5-1-2z M5 3v3M8 2v4M10.500 3v3" fill="#fff" stroke={K} />),
  undo: (<path d="M2 3v5h5M3 7l2-3h5l3 3v4l-3 3h-1" stroke="#5a5200" strokeWidth="1.400" />),
  redo: (<path d="M14 3v5h-5M13 7l-2-3H6L3 7v4l3 3h1" stroke={G} />),
  rotate: (<path d="M2 3l3-2h6l3 3M14.500 1v4M11 4.500h3M6 6.500H1.500v8H6M1 10.500h4M8 14V9.500h8V14M12 10v4" stroke={G} />),
  mirror: (<path d="M2 3l3-2h6l3 3M14.500 1v4M11 4.500h3M6 6.500H1.500v8H6M1 10.500h3M10 6.500h4.500v8H10M12 10.500h2" stroke={G} />),
};
const ToolLetters = styled.span`
  font: ${(p) => (p.$slant ? "italic 700" : "400")} 13px/16px "Liberation Serif", "Times New Roman", serif;
`;

const TOOLS = [
  ["new", "open"], ["save"], ["hammer"], ["run", "stop"], ["zoomIn", "zoomArea", "zoomOut", "zoomFit"],
  ["plot", "fft"], ["tile", "cascade", "closeAll"], ["cut", "copy", "paste", "find"], ["printSetup", "print"],
  ["wire", "ground", "label", "resistor", "capacitor", "inductor", "diode", "gate", "move", "drag", "undo", "redo", "rotate", "mirror"],
];
const MENUS = [
  ["", "F", "ile"], ["", "E", "dit"], ["H", "i", "erarchy"], ["", "V", "iew"], ["", "S", "imulate"],
  ["", "T", "ools"], ["", "W", "indow"], ["", "H", "elp"],
];

const StatusBar = styled.footer`
  flex: none;
  height: 21px;
  display: flex;
  align-items: center;
  justify-content: flex-end;
  padding: 2px 4px 0 0;
  border-top: 1px solid #8e8e8e;
  box-shadow: inset 0 1px #fff;
  background: #f0edec;
`;

const ChildCaption = ({ active, name }) => (
  <CaptionGroup>
    <CaptionButton $tone={active && "active"} aria-label={`Minimize ${name}`}><Glyph kind="min" /></CaptionButton>
    <CaptionButton $tone={active && "active"} aria-label={`Maximize ${name}`}><Glyph kind="max" /></CaptionButton>
    <CaptionButton $tone={active && "close"} aria-label={`Close ${name}`}><Glyph kind="x" /></CaptionButton>
  </CaptionGroup>
);

export default function App() {
  return (
    <Shell>
      <Global />
      <TitleBar>
        <TitleIcon><LtLogo /></TitleIcon>
        <TitleText>LTspice IV - TRSFsplitRDH.asc</TitleText>
        <MainCaption>
          <MainCaptionButton $w={35} $first aria-label="Minimize"><Glyph kind="min" /></MainCaptionButton>
          <MainCaptionButton $w={33} aria-label="Restore"><Glyph kind="restore" /></MainCaptionButton>
          <MainCaptionButton $w={59} $close aria-label="Close"><Glyph kind="x" /></MainCaptionButton>
        </MainCaption>
      </TitleBar>
      <MenuBar>
        {MENUS.map(([a, b, c]) => (
          <MenuItem key={a + b + c}>{a}<u>{b}</u>{c}</MenuItem>
        ))}
      </MenuBar>
      <ToolRow>
        <ToolBar role="toolbar">
          <Grip />
          {TOOLS.map((group, i) => (
            <React.Fragment key={group[0]}>
              {i > 0 && <Separator />}
              {group.map((id) => (
                <ToolButton key={id} aria-label={id}>
                  <Pixels width="16" height="16" viewBox="0 0 16 16">{ICONS[id]}</Pixels>
                </ToolButton>
              ))}
            </React.Fragment>
          ))}
          <ToolButton><ToolLetters $slant>Aa</ToolLetters></ToolButton>
          <ToolButton><ToolLetters>.op</ToolLetters></ToolButton>
        </ToolBar>
      </ToolRow>
      <TabRow>
        <Tab $active><TabSchematicIcon />TRSFsplitRDH.asc</Tab>
        <Tab><WaveIcon />TRSFsplitRDH.asc</Tab>
      </TabRow>
      <Desk>
        <Child>
          <ChildTitle>
            <ChildIcon><WaveIcon size={20} /></ChildIcon>
            <ChildName>TRSFsplitRDH.asc</ChildName>
            <ChildCaption name="plot" />
          </ChildTitle>
          <Canvas $dark>
            <Plot>
              <TraceLabels>
                <TraceLabel $color="#00ff00" $selected>V(outlf)-V(outHF)</TraceLabel>
                <TraceLabel $color="#d8d800">V(outhf)</TraceLabel>
                <TraceLabel $color="#ff0000">V(outlf)</TraceLabel>
              </TraceLabels>
              <WaveForm />
            </Plot>
          </Canvas>
        </Child>
        <Child $active>
          <ChildTitle>
            <ChildIcon><SchematicIcon /></ChildIcon>
            <ChildName $active>TRSFsplitRDH.asc</ChildName>
            <ChildCaption active name="schematic" />
          </ChildTitle>
          <Canvas>
            <Schematic />
            <CursorDialog />
          </Canvas>
        </Child>
      </Desk>
      <StatusBar>Alternate</StatusBar>
    </Shell>
  );
}
